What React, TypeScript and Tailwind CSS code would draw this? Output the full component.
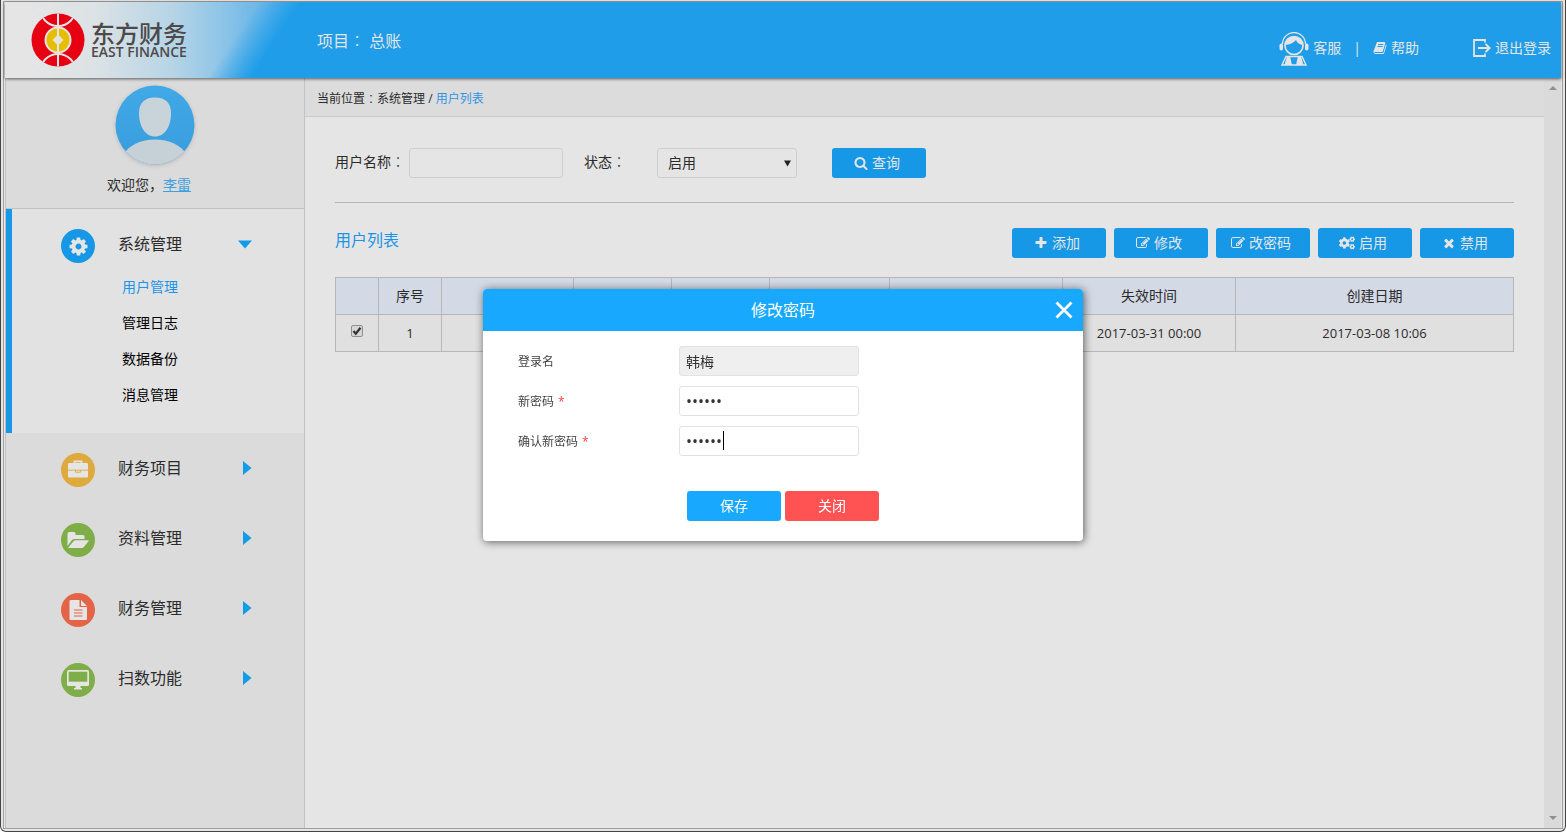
import { useState } from "react";
import type { ReactNode } from "react";
import { FaCogs } from "react-icons/fa";

// Font Awesome 4 outlines, 1792 grid
const glyphs = {
  plus: "M1600 736v192q0 40-28 68t-68 28h-416v416q0 40-28 68t-68 28h-192q-40 0-68-28t-28-68v-416h-416q-40 0-68-28t-28-68v-192q0-40 28-68t68-28h416v-416q0-40 28-68t68-28h192q40 0 68 28t28 68v416h416q40 0 68 28t28 68z",
  times:
    "M1490 1322q0 40-28 68l-136 136q-28 28-68 28t-68-28l-294-294-294 294q-28 28-68 28t-68-28l-136-136q-28-28-28-68t28-68l294-294-294-294q-28-28-28-68t28-68l136-136q28-28 68-28t68 28l294 294 294-294q28-28 68-28t68 28l136 136q28 28 28 68t-28 68l-294 294 294 294q28 28 28 68z",
  search:
    "M1216 832q0-185-131.500-316.500t-316.500-131.500-316.500 131.500-131.500 316.500 131.500 316.500 316.500 131.500 316.500-131.500 131.500-316.500zm512 832q0 52-38 90t-90 38q-54 0-90-38l-343-342q-179 124-399 124-143 0-273.500-55.500t-225-150-150-225-55.500-273.500 55.500-273.500 150-225 225-150 273.500-55.500 273.500 55.500 225 150 150 225 55.500 273.500q0 220-124 399l343 343q37 37 37 90z",
  cog: "M1152 896q0-106-75-181t-181-75-181 75-75 181 75 181 181 75 181-75 75-181zm512-109v222q0 12-8 23t-20 13l-185 28q-19 54-39 91 35 50 107 138 10 12 10 25t-9 23q-27 37-99 108t-94 71q-12 0-26-9l-138-108q-44 23-91 38-16 136-29 186-7 28-36 28h-222q-14 0-24.500-8.500t-11.500-21.500l-28-184q-49-16-90-37l-141 107q-10 9-25 9-14 0-25-11-126-114-165-168-7-10-7-23 0-12 8-23 15-21 51-66.500t54-70.500q-27-50-41-99l-183-27q-13-2-21-12.500t-8-23.500v-222q0-12 8-23t19-13l186-28q14-46 39-92-40-57-107-138-10-12-10-24 0-10 9-23 26-36 98.500-107.500t94.500-71.500q13 0 26 10l138 107q44-23 91-38 16-136 29-186 7-28 36-28h222q14 0 24.500 8.500t11.500 21.500l28 184q49 16 90 37l142-107q9-9 24-9 13 0 25 10 129 119 165 170 7 8 7 22 0 12-8 23-15 21-51 66.500t-54 70.500q26 50 41 98l183 28q13 2 21 12.500t8 23.500z",
  edit: "M888 1184l116-116-152-152-116 116v56h96v96h56zm440-720q-16-16-33 1l-350 350q-17 17-1 33t33-1l350-350q17-17 1-33zm80 594v190q0 119-84.500 203.500t-203.500 84.500h-832q-119 0-203.500-84.500t-84.500-203.500v-832q0-119 84.500-203.500t203.500-84.500h832q63 0 117 25 15 7 18 23 3 17-9 29l-49 49q-14 14-32 8-23-6-45-6h-832q-66 0-113 47t-47 113v832q0 66 47 113t113 47h832q66 0 113-47t47-113v-126q0-13 9-22l64-64q15-15 35-7t20 29zm-96-738l288 288-672 672h-288v-288zm444 132l-92 92-288-288 92-92q28-28 68-28t68 28l152 152q28 28 28 68t-28 68z",
  book: "M1703 478q40 57 18 129l-275 906q-19 64-76.500 107.500t-122.500 43.500h-923q-77 0-148.500-53.500t-99.500-131.500q-24-67-2-127 0-4 3-27t4-37q1-8-3-21.500t-3-19.500q2-11 8-21t16.500-23.500 16.500-23.500q23-38 45-91.500t30-91.500q3-10 .5-30t-.5-28q3-11 17-28t17-23q21-36 42-92t25-90q1-9-2.500-32t.5-28q4-13 22-30.500t22-22.500q19-26 42.500-84.500t27.500-96.500q1-8-3-25.500t-2-26.500q2-8 9-18t18-23 17-21q8-12 16.500-30.500t15-35 16-36 19.500-32 26.500-23.500 36-11.500 47.500 5.500l-1 3q38-9 51-9h761q74 0 114 56t18 130l-274 906q-36 119-71.500 153.500t-128.500 34.500h-869q-27 0-38 15-11 16-1 43 24 70 144 70h923q29 0 56-15.500t35-41.500l300-987q7-22 5-57 38 15 59 43zm-1064 2q-4 13 2 22.500t20 9.500h608q13 0 25.500-9.500t16.500-22.500l21-64q4-13-2-22.500t-20-9.500h-608q-13 0-25.500 9.500t-16.500 22.500zm-83 256q-4 13 2 22.500t20 9.500h608q13 0 25.500-9.500t16.500-22.500l21-64q4-13-2-22.500t-20-9.500h-608q-13 0-25.500 9.500t-16.500 22.500z",
};

function Glyph({ name, size = 14 }: { name: keyof typeof glyphs; size?: number }) {
  return (
    <svg width={size} height={size} viewBox="0 0 1792 1792" fill="currentColor" aria-hidden>
      <path d={glyphs[name]} />
    </svg>
  );
}

// full-width colon, centred in its cell
function Colon() {
  return <span className="font-['Noto_Sans_CJK_TC',sans-serif] font-light">：</span>;
}

function Logo() {
  return (
    <div className="flex items-center gap-1.5">
      <svg width="54" height="54" viewBox="0 0 54 54" aria-hidden>
        <defs>
          <clipPath id="coin">
            <circle cx="27" cy="27" r="26.5" />
          </clipPath>
        </defs>
        <g clipPath="url(#coin)">
          <rect width="54" height="54" fill="#e60012" />
          <g fill="none" stroke="#e5e5e5" strokeWidth="2">
            <circle cx="27" cy="-5" r="18" />
            <circle cx="27" cy="59" r="18" />
            <path d="M27 0v54" />
          </g>
        </g>
        <circle cx="27" cy="27" r="13.500" fill="#e5e5e5" />
        <circle cx="27" cy="27" r="11.500" fill="#e6be00" />
        <path d="M27 15v24" stroke="#e5e5e5" strokeWidth="2" />
        <path d="M27 21.500l5.500 5.500-5.500 5.500-5.500-5.500z" fill="#e5e5e5" />
      </svg>
      <div className="text-[#4d4a49]">
        <div className="text-2xl leading-6 font-medium">东方财务</div>
        <div className="text-sm leading-3 font-semibold">EAST FINANCE</div>
      </div>
    </div>
  );
}

function Header() {
  return (
    <header className="relative z-10 flex h-[76px] items-center bg-[linear-gradient(124deg,transparent_210px,#1f9de9_246px),linear-gradient(90deg,#e5e5e5_20px,#dce2e5_90px,#b4d4e6_170px,#8fc5e7_215px,#74bae8_245px,#4faeea_300px)] pr-2.5 pl-[26px] text-sm text-[#e5e5e5] shadow-[0_1px_3px_rgba(0,0,0,0.6)]">
      <div className="w-[286px]">
        <Logo />
      </div>
      <div className="flex-1 text-base">
        项目<Colon /> 总账
      </div>
      <nav className="flex items-center pt-4">
        <a href="#service" className="flex items-center gap-1">
          <svg width="30" height="34" viewBox="0 0 30 34" fill="none" stroke="currentColor" className="mt-0.5" aria-hidden>
            <path d="M3.500 12a11.500 11.500 0 0 1 23 0" strokeWidth="1.300" />
            <circle cx="15" cy="13.500" r="9" strokeWidth="1.700" />
            <path d="M6.500 13c4-.5 8-2 10.500-5 1 2.500 3 4.500 6.500 5-.5-5-4-8.500-8.500-8.500S7 8 6.500 13z" fill="currentColor" stroke="none" />
            <rect x="0.500" y="11.500" width="3.500" height="7" rx="1.700" fill="currentColor" stroke="none" />
            <rect x="26" y="11.500" width="3.500" height="7" rx="1.700" fill="currentColor" stroke="none" />
            <path d="M7 24.500h16l4 8.500H3z" strokeWidth="1.400" />
            <path d="M8 24h3l2 9H5.500zM22 24h-3l-2 9h7.500z" fill="currentColor" stroke="none" />
          </svg>
          客服
        </a>
        <span className="mx-3">|</span>
        <a href="#help" className="flex items-center gap-1">
          <Glyph name="book" />
          帮助
        </a>
        <a href="#logout" className="ml-[54px] flex items-center gap-1">
          <svg width="18" height="18" viewBox="0 0 18 18" fill="none" stroke="currentColor" strokeWidth="1.800" aria-hidden>
            <path d="M12 3.500V1H1v16h11v-2.500M5 9h11.500M12.500 4.800L16.700 9l-4.200 4.200" />
          </svg>
          退出登录
        </a>
      </nav>
    </header>
  );
}

function Avatar() {
  return (
    <svg width="80" height="80" viewBox="0 0 80 80" className="drop-shadow-sm" aria-hidden>
      <defs>
        <linearGradient id="sky" x1="0" y1="0" x2="0" y2="1">
          <stop offset="0" stopColor="#41a9e8" />
          <stop offset="1" stopColor="#389cdd" />
        </linearGradient>
        <clipPath id="face">
          <circle cx="40" cy="40" r="39.500" />
        </clipPath>
      </defs>
      <g clipPath="url(#face)">
        <rect width="80" height="80" fill="url(#sky)" />
        <path d="M40 12.500c11 0 16 6 16 15.500 0 13-6 23.500-16 23.500S24 41 24 28c0-9.500 5-15.500 16-15.500z" fill="#c9d3da" />
        <path d="M8 70c6-10 18-15.500 32-15.500S66 60 72 70v10H8z" fill="#c6d0d7" />
      </g>
    </svg>
  );
}

const briefcase = (
  <svg width="22" height="22" viewBox="0 0 22 22" aria-hidden>
    <path d="M7.500 4V2.300h7V4" fill="none" stroke="#e5e5e5" strokeWidth="1.800" />
    <rect x="1" y="4" width="20" height="14.500" rx="1" fill="#e5e5e5" />
    <path d="M1 11.200h20M8.500 11.200v2h5v-2" fill="none" stroke="#dea93d" strokeWidth="0.900" />
  </svg>
);

const folder = (
  <svg width="24" height="20" viewBox="0 0 24 20" fill="#e5e5e5" aria-hidden>
    <path d="M1.500 16V3.500Q1.500 2 3 2h5q1.500 0 1.500 1.500V5H17q1.500 0 1.500 1.500V9H8.500Q7 9 6 10z" />
    <path d="M2 18l5.500-6.700q.8-1.100 2-1.100h12.700q1 0 .3 1L18 16.800q-1 1.200-2.300 1.200z" />
  </svg>
);

const doc = (
  <svg width="20" height="22" viewBox="0 0 20 22" aria-hidden>
    <path d="M2.500 1h9v7H19v12q0 1-1 1H2.500q-1 0-1-1V2q0-1 1-1zM13 1l6 6h-6z" fill="#e5e5e5" />
    <path d="M6 11h8.500M6 14h8.500M6 17h8.500" stroke="#e46448" strokeWidth="1.200" />
  </svg>
);

const monitor = (
  <svg width="24" height="20" viewBox="0 0 24 20" aria-hidden>
    <rect x="1" y="0" width="22" height="16" rx="1.500" fill="#e5e5e5" />
    <rect x="2.700" y="1.700" width="18.600" height="10" fill="#7fae48" />
    <path d="M9.500 16h5v2H16v1.500H8V18h1.500z" fill="#e5e5e5" />
  </svg>
);

const menus = [
  { label: "财务项目", icon: briefcase, color: "bg-[#dea93d]" },
  { label: "资料管理", icon: folder, color: "bg-[#7fae48]" },
  { label: "财务管理", icon: doc, color: "bg-[#e46448]" },
  { label: "扫数功能", icon: monitor, color: "bg-[#7fae48]" },
];

const subMenus = ["用户管理", "管理日志", "数据备份", "消息管理"];

function MenuButton({ label, icon, color, open }: { label: string; icon: ReactNode; color: string; open?: boolean }) {
  return (
    <button type="button" className="flex h-[60px] w-full items-center pt-3.5 pl-[55px] text-left text-base">
      <span className={`flex size-[34px] items-center justify-center rounded-full ${color}`}>{icon}</span>
      <span className="mb-1 ml-[23px] w-[120px]">{label}</span>
      <svg width="14" height="14" viewBox="0 0 14 14" fill="#109ce8" className="mb-1" aria-hidden>
        {open ? <path d="M0 3.500h14L7 11.500z" /> : <path d="M5 0v14l8.500-7z" />}
      </svg>
    </button>
  );
}

function Sidebar() {
  return (
    <aside className="w-[300px] shrink-0 border-x border-[#c2c2c2] bg-[#dbdbdb] text-[#2b2b2b]">
      <div className="flex h-[131px] flex-col items-center border-b border-[#c2c2c2] pt-[7px]">
        <Avatar />
        <p className="mt-2.5 pr-3 text-sm">
          欢迎您，
          <a href="#me" className="text-[#3f9fe0] underline">
            李雷
          </a>
        </p>
      </div>
      <ul>
        <li className="border-l-[6px] border-[#1698e6] bg-[#e2e2e2] pb-5">
          <div className="-ml-1.5">
            <MenuButton
              label="系统管理"
              color="bg-[#1698e6] text-[#e5e5e5]"
              icon={<Glyph name="cog" size={21} />}
              open
            />
          </div>
          <ul className="text-sm text-black">
            {subMenus.map((name, i) => (
              <li key={name} className="pl-[110px] leading-9">
                <a href="#sub" className={i === 0 ? "text-[#1c94e8]" : ""}>
                  {name}
                </a>
              </li>
            ))}
          </ul>
        </li>
        {menus.map((m) => (
          <li key={m.label} className="mb-2.5">
            <MenuButton {...m} />
          </li>
        ))}
      </ul>
    </aside>
  );
}

function ToolButton({ icon, children }: { icon: ReactNode; children: ReactNode }) {
  return (
    <button
      type="button"
      className="flex h-[30px] w-[94px] items-center justify-center gap-1 rounded-[3px] bg-[#1698e6] pr-1 text-sm text-[#e5e5e5]"
    >
      {icon}
      {children}
    </button>
  );
}

function SearchForm() {
  return (
    <form className="flex h-[30px] items-center text-sm">
      <label htmlFor="name" className="mr-1 mb-1">
        用户名称<Colon />
      </label>
      <input id="name" className="h-[30px] w-[154px] rounded-[3px] border border-[#cecece] px-2" />
      <label htmlFor="status" className="mr-[31px] mb-1 ml-[21px]">
        状态<Colon />
      </label>
      <div className="relative mr-[35px]">
        <select id="status" className="h-[30px] w-[140px] appearance-none rounded-[3px] border border-[#cecece] px-2.5">
          <option>启用</option>
          <option>禁用</option>
        </select>
        <svg width="7" height="7" viewBox="0 0 7 7" className="pointer-events-none absolute top-3 right-1.5" aria-hidden>
          <path d="M0 .5h7l-3.500 6z" fill="#222" />
        </svg>
      </div>
      <ToolButton icon={<Glyph name="search" />}>查询</ToolButton>
    </form>
  );
}

function UserTable() {
  return (
    <table className="w-full table-fixed border-collapse text-center text-sm [&_td]:border [&_td]:border-[#b7b7b7] [&_th]:border [&_th]:border-[#b7b7b7]">
      <colgroup>
        <col className="w-[43px]" />
        <col className="w-[63px]" />
        <col className="w-[132px]" />
        <col className="w-[98px]" />
        <col className="w-[98px]" />
        <col className="w-[120px]" />
        <col className="w-[173px]" />
        <col className="w-[173px]" />
        <col />
      </colgroup>
      <thead className="bg-[#d3d9e5]">
        <tr className="h-[37px] [&>th]:font-normal">
          <th />
          <th>序号</th>
          <th />
          <th />
          <th />
          <th />
          <th />
          <th>失效时间</th>
          <th>创建日期</th>
        </tr>
      </thead>
      <tbody className="bg-[#e0e0e0] text-[13px]">
        <tr className="h-[37px]">
          <td>
            <label className="relative mx-auto mb-1 block size-3">
              <input
                type="checkbox"
                aria-label="选择"
                defaultChecked
                className="peer block size-3 appearance-none rounded-xs border border-[#8f8f8f] bg-[#d6d6d6]"
              />
              <svg viewBox="0 0 12 12" className="absolute inset-0 hidden peer-checked:block" aria-hidden>
                <path d="M2.500 6l2.300 2.800 4.700-6" fill="none" stroke="#333" strokeWidth="2.200" />
              </svg>
            </label>
          </td>
          <td>1</td>
          <td />
          <td />
          <td />
          <td />
          <td />
          <td>2017-03-31 00:00</td>
          <td>2017-03-08 10:06</td>
        </tr>
      </tbody>
    </table>
  );
}

function Field({ id, label, required, children }: { id: string; label: string; required?: boolean; children: ReactNode }) {
  return (
    <div className="flex h-[30px] items-center">
      <label htmlFor={id} className="w-[161px] pt-0.5 text-xs text-[#444]">
        {label}
        {required && <span className="ml-1 text-[#ff4040]">*</span>}
      </label>
      {children}
    </div>
  );
}

function PasswordDialog({ onClose }: { onClose: () => void }) {
  return (
    <div className="fixed inset-0 z-20 flex items-center justify-center pb-0.5">
      <div
        role="dialog"
        aria-labelledby="dialog-title"
        className="w-[600px] overflow-hidden rounded bg-white text-sm text-[#333] shadow-[1px_1px_8px_rgba(0,0,0,0.6)]"
      >
        <div className="relative bg-[#18a9ff] text-center text-white">
          <h2 id="dialog-title" className="text-base leading-[42px]">
            修改密码
          </h2>
          <button type="button" aria-label="关闭" onClick={onClose} className="absolute top-3 right-2.5">
            <svg width="18" height="18" viewBox="0 0 18 18" stroke="currentColor" strokeWidth="2.800" aria-hidden>
              <path d="M1.500 1.500l15 15M16.500 1.500l-15 15" />
            </svg>
          </button>
        </div>
        <form className="flex flex-col gap-2.5 px-[35px] pt-[15px] pb-5">
          <Field id="login" label="登录名">
            <input id="login" readOnly value="韩梅" className="h-[30px] w-[180px] rounded-[3px] border border-[#e2e2e2] bg-[#efefef] px-1.5" />
          </Field>
          <Field id="pwd" label="新密码" required>
            <input id="pwd" type="password" defaultValue="123456" className="h-[30px] w-[180px] rounded-[3px] border border-[#e2e2e2] px-1.5 text-base" />
          </Field>
          <Field id="pwd2" label="确认新密码" required>
            <div className="relative">
              <input id="pwd2" type="password" defaultValue="123456" className="h-[30px] w-[180px] rounded-[3px] border border-[#e2e2e2] px-1.5 text-base" />
              <span className="absolute top-[5px] left-11 h-[19px] w-px bg-black" />
            </div>
          </Field>
          <div className="mt-[25px] flex justify-center gap-1 text-white">
            <button type="button" className="h-[30px] w-[94px] rounded-[3px] bg-[#18a9ff]">
              保存
            </button>
            <button type="button" onClick={onClose} className="h-[30px] w-[94px] rounded-[3px] bg-[#ff5252]">
              关闭
            </button>
          </div>
        </form>
      </div>
    </div>
  );
}

export default function App() {
  const [open, setOpen] = useState(true);

  return (
    <div className="h-screen rounded-b-md border-x border-b border-[#444] bg-[#e5e5e5] px-0.5 pt-px pb-0.5 font-['Open_Sans','Noto_Sans_CJK_SC',sans-serif] text-[#2b2b2b]">
      <div className="flex h-full flex-col border border-[#a0a0a0] px-px">
        <Header />
        <div className="flex min-h-0 flex-1">
          <Sidebar />
          <main className="min-w-0 flex-1">
            <div className="flex h-[39px] items-center border-b border-[#cbcbcb] bg-[#dcdcdc] pt-1 pl-3 text-xs">
              当前位置<Colon />系统管理 /&nbsp;
              <a href="#users" className="text-[#2f93e4]">
                用户列表
              </a>
            </div>
            <div className="px-[30px] pt-[31px]">
              <SearchForm />
              <hr className="mt-6 border-[#b5b5b5]" />
              <div className="mt-[25px] mb-[19px] flex items-center justify-between">
                <h1 className="mb-1.5 text-base text-[#1c94e8]">用户列表</h1>
                <div className="flex gap-2">
                  <ToolButton icon={<Glyph name="plus" />}>添加</ToolButton>
                  <ToolButton icon={<Glyph name="edit" />}>修改</ToolButton>
                  <ToolButton icon={<Glyph name="edit" />}>改密码</ToolButton>
                  <ToolButton icon={<FaCogs size={16} />}>启用</ToolButton>
                  <ToolButton icon={<Glyph name="times" />}>禁用</ToolButton>
                </div>
              </div>
              <UserTable />
            </div>
          </main>
          {/* scroll track */}
          <div className="flex w-[17px] shrink-0 flex-col items-center justify-between bg-[#dadada] pt-2 pb-2">
            <svg width="8" height="4" viewBox="0 0 8 4" fill="#909090" aria-hidden>
              <path d="M0 4l4-4 4 4z" />
            </svg>
            <svg width="8" height="4" viewBox="0 0 8 4" fill="#909090" aria-hidden>
              <path d="M0 0l4 4 4-4z" />
            </svg>
          </div>
        </div>
      </div>
      {open && <PasswordDialog onClose={() => setOpen(false)} />}
    </div>
  );
}
